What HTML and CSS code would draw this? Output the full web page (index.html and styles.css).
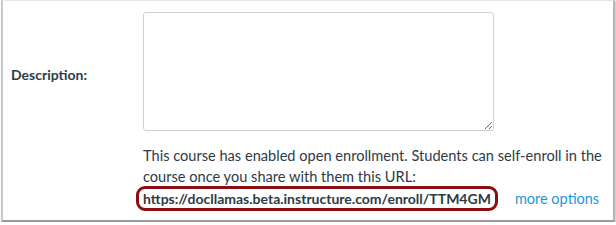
FILE: index.html
```
<!DOCTYPE html>
<html lang="en">
<head>
  <meta charset="UTF-8">
  <title>Course Details</title>
  <link rel="stylesheet" href="styles.css">
</head>
<body>

<div class="panel">
  <div class="row">
    <label class="label" for="description">Description:</label>
    <div class="field">
      <textarea id="description" class="textarea"></textarea>
      <p class="help">This course has enabled open enrollment. Students can self-enroll in the course once you share with them this URL:</p>
      <div class="url-row">
        <span class="url">https://docllamas.beta.instructure.com/enroll/TTM4GM</span>
        <a class="more" href="#">more options</a>
      </div>
    </div>
  </div>
</div>

</body>
</html>
```

FILE: styles.css
```
body {
  margin: 0;
  background: #fff;
  font-family: Lato, "Open Sans", sans-serif;
  color: #2d3b45;
}
.panel {
  width: 614px;
  height: 222px;
  margin-left: 1px;
  border-top: 1px solid #e6e6e6;
  border-left: 2px solid #c8c8c8;
  border-right: 2px solid #b5b5b5;
  border-bottom: 2px solid #9a9a9a;
  box-shadow: 1px 1px 2px rgba(0, 0, 0, 0.25);
  box-sizing: border-box;
}
.row {
  display: flex;
  padding-top: 11px;
}
.label {
  width: 132px;
  padding-left: 8px;
  padding-top: 54px;
  font-size: 14px;
  font-weight: bold;
  box-sizing: border-box;
  flex: 0 0 140px;
}
.field {
  flex: 1;
}
.textarea {
  display: block;
  width: 351px;
  height: 119px;
  margin: 0;
  border: 1px solid #cfcfcf;
  border-radius: 3px;
  box-sizing: border-box;
  resize: vertical;
}
.help {
  margin: 14px 0 0;
  width: 466px;
  font-size: 14.6px;
  line-height: 21px;
}
.url-row {
  display: flex;
  align-items: center;
  margin-top: -1px;
  margin-left: -7px;
}
.url {
  border: 3px solid #8c0d12;
  border-radius: 9px;
  padding: 1px 4px;
  font-size: 14px;
  font-weight: bold;
}
.more {
  margin-left: 17px;
  font-size: 14.5px;
  color: #1c98dc;
  text-decoration: none;
}
```
